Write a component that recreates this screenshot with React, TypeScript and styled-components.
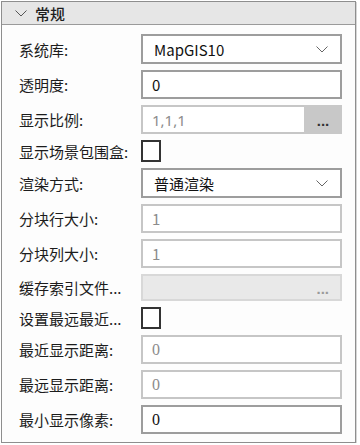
import styled, { createGlobalStyle } from "styled-components";

const GlobalStyle = createGlobalStyle`
  html, body {
    margin: 0;
    padding: 0;
    background: #ffffff;
  }
  body {
    font-family: "Noto Sans CJK SC", "Noto Sans", sans-serif;
  }
`;

const Panel = styled.div`
  margin: 1px 0 0 1px;
  width: 353px;
  height: 440px;
  border: 1px solid #8e8e8e;
  box-shadow: 1px 1px 0 #d6d6d6;
  background: #fdfdfd;
  box-sizing: content-box;
  display: flex;
  flex-direction: column;
`;

const Header = styled.div`
  height: 22px;
  display: flex;
  align-items: center;
  gap: 8px;
  padding-left: 13px;
  background: #e6e6e6;
  border-bottom: 1px solid #9a9a9a;
  font-size: 15px;
  font-weight: 500;
  color: #1e1e1e;
`;

const Body = styled.div`
  display: grid;
  grid-template-columns: 122px 201px;
  row-gap: 6px;
  padding: 9px 0 0 17px;
  align-items: center;
`;

const Label = styled.div`
  font-size: 15px;
  color: #1c1c1c;
  white-space: nowrap;
`;

type BoxProps = { $disabled?: boolean; $h?: number };

const Field = styled.div<BoxProps>`
  height: ${(p) => p.$h ?? 29}px;
  box-sizing: border-box;
  border: 2px solid ${(p) => (p.$disabled ? "#c6c6c6" : "#9d9d9d")};
  background: #ffffff;
  display: flex;
  align-items: center;
  padding-left: 9px;
  font-size: 15px;
  color: ${(p) => (p.$disabled ? "#8c8c8c" : "#111111")};
`;

const Select = styled(Field)`
  justify-content: space-between;
  padding: 0 12px 0 11px;
`;

const NumText = styled.span<{ $disabled?: boolean }>`
  font-family: "Liberation Serif", serif;
  font-size: 16px;
  color: ${(p) => (p.$disabled ? "#8c8c8c" : "#111111")};
`;

const Split = styled.div`
  display: flex;
  height: 29px;
`;

const SplitInput = styled(Field)`
  flex: 1;
  height: 100%;
  border-right: none;
  font-family: "Noto Sans", sans-serif;
`;

const DotsButton = styled.div`
  width: 38px;
  background: #c8c8c8;
  display: flex;
  align-items: center;
  justify-content: center;
  font-family: "Liberation Sans", sans-serif;
  font-size: 15px;
  font-weight: bold;
  color: #333;
  padding-top: 2px;
  box-sizing: border-box;
`;

const PathField = styled.div`
  height: 27px;
  box-sizing: border-box;
  border: 2px solid #d8d8d8;
  background: #e9e9e9;
  display: flex;
  align-items: center;
  justify-content: flex-end;
  padding: 2px 11px 0 0;
  font-family: "Liberation Sans", sans-serif;
  font-size: 15px;
  font-weight: bold;
  color: #9a9a9a;
`;

const Check = styled.div`
  width: 20px;
  height: 22px;
  box-sizing: border-box;
  border: 2px solid #333333;
  background: #ffffff;
`;

const Chevron = ({ color = "#666" }: { color?: string }) => (
  <svg width="12" height="7" viewBox="0 0 12 7">
    <path d="M0.5 0.5 L6 6 L11.5 0.5" fill="none" stroke={color} strokeWidth="1" />
  </svg>
);

export default function App() {
  return (
    <>
      <GlobalStyle />
      <Panel>
        <Header>
          <Chevron color="#555" />
          <span>常规</span>
        </Header>
        <Body>
          <Label>系统库:</Label>
          <Select $h={30}>
            <span>MapGIS10</span>
            <Chevron />
          </Select>

          <Label>透明度:</Label>
          <Field>0</Field>

          <Label>显示比例:</Label>
          <Split>
            <SplitInput $disabled>1,1,1</SplitInput>
            <DotsButton>...</DotsButton>
          </Split>

          <Label>显示场景包围盒:</Label>
          <Check />

          <Label>渲染方式:</Label>
          <Select $h={30}>
            <span>普通渲染</span>
            <Chevron />
          </Select>

          <Label>分块行大小:</Label>
          <Field $disabled>1</Field>

          <Label>分块列大小:</Label>
          <Field $disabled>1</Field>

          <Label>缓存索引文件...</Label>
          <PathField>...</PathField>

          <Label>设置最远最近...</Label>
          <Check />

          <Label>最近显示距离:</Label>
          <Field $disabled>
            <NumText $disabled>0</NumText>
          </Field>

          <Label>最远显示距离:</Label>
          <Field $disabled>
            <NumText $disabled>0</NumText>
          </Field>

          <Label>最小显示像素:</Label>
          <Field>
            <NumText>0</NumText>
          </Field>
        </Body>
      </Panel>
    </>
  );
}
